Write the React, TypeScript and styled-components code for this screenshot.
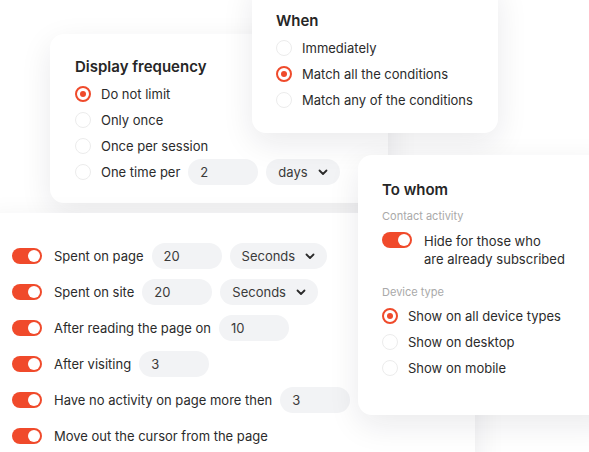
import React from 'react';
import styled, { createGlobalStyle } from 'styled-components';

const GlobalStyle = createGlobalStyle`
  html, body {
    margin: 0;
    padding: 0;
    background: #ffffff;
  }
  body {
    font-family: Inter, 'Noto Sans', sans-serif;
    color: #2b2b2b;
  }
`;

const Canvas = styled.div`
  position: relative;
  width: 589px;
  height: 452px;
  overflow: hidden;
  background: #ffffff;
`;

const Card = styled.div<{ $left: number; $top: number; $width: number; $height: number; $pt: number; $pl: number; $z: number }>`
  position: absolute;
  left: ${(p) => p.$left}px;
  top: ${(p) => p.$top}px;
  width: ${(p) => p.$width}px;
  height: ${(p) => p.$height}px;
  padding: ${(p) => p.$pt}px 0 0 ${(p) => p.$pl}px;
  box-sizing: border-box;
  background: #ffffff;
  border-radius: 14px;
  box-shadow: 0 10px 32px rgba(20, 20, 40, 0.09);
  z-index: ${(p) => p.$z};
  display: flex;
  flex-direction: column;
`;

const Title = styled.div`
  font-size: 15px;
  font-weight: 600;
  line-height: 20px;
  color: #262626;
  margin-bottom: 4px;
`;

const List = styled.div<{ $gap?: number }>`
  display: flex;
  flex-direction: column;
  gap: ${(p) => p.$gap ?? 0}px;
`;

const Row = styled.div`
  display: flex;
  align-items: center;
  height: 26px;
  font-size: 13px;
  color: #2b2b2b;
  white-space: nowrap;
`;

const Circle = styled.span<{ $on?: boolean }>`
  width: 16px;
  height: 16px;
  border-radius: 50%;
  box-sizing: border-box;
  border: ${(p) => (p.$on ? '2px solid #ef4a2b' : '1.5px solid #ececec')};
  margin-right: 10px;
  display: flex;
  align-items: center;
  justify-content: center;
  flex-shrink: 0;
  &::after {
    content: '';
    width: 6px;
    height: 6px;
    border-radius: 50%;
    background: ${(p) => (p.$on ? '#ef4a2b' : 'transparent')};
  }
`;

const Toggle = styled.span`
  position: relative;
  width: 30px;
  height: 16px;
  border-radius: 8px;
  background: #f04a2b;
  margin-right: 12px;
  flex-shrink: 0;
  &::after {
    content: '';
    position: absolute;
    right: 2px;
    top: 2px;
    width: 12px;
    height: 12px;
    border-radius: 50%;
    background: #ffffff;
  }
`;

const Field = styled.span`
  display: inline-flex;
  align-items: center;
  box-sizing: border-box;
  width: 70px;
  height: 26px;
  border-radius: 13px;
  background: #f2f3f5;
  padding-left: 12px;
  margin-left: 8px;
  font-size: 13px;
  color: #3a3a3a;
`;

const Select = styled.span`
  display: inline-flex;
  align-items: center;
  gap: 10px;
  box-sizing: border-box;
  height: 26px;
  border-radius: 13px;
  background: #f2f3f5;
  padding: 0 12px;
  margin-left: 8px;
  font-size: 13px;
  color: #3a3a3a;
`;

const Label = styled.div<{ $mt: number; $mb: number }>`
  font-size: 11px;
  line-height: 14px;
  color: #a9a9a9;
  margin-top: ${(p) => p.$mt}px;
  margin-bottom: ${(p) => p.$mb}px;
`;

const ToggleRow = styled.div`
  display: flex;
  align-items: flex-start;
  font-size: 13px;
  line-height: 18px;
  color: #2b2b2b;
`;

const Chevron = () => (
  <svg width="10" height="7" viewBox="0 0 10 7" fill="none">
    <path d="M1.5 1.5L5 5L8.5 1.5" stroke="#2b2b2b" strokeWidth="1.8" strokeLinecap="round" strokeLinejoin="round" />
  </svg>
);

const Radio = ({ on, children }: { on?: boolean; children: React.ReactNode }) => (
  <Row>
    <Circle $on={on} />
    {children}
  </Row>
);

const Switch = ({ children }: { children: React.ReactNode }) => (
  <Row>
    <Toggle />
    {children}
  </Row>
);

export default function App() {
  return (
    <>
      <GlobalStyle />
      <Canvas>
        <Card $left={50} $top={34} $width={338} $height={169} $pt={23} $pl={25} $z={1}>
          <Title>Display frequency</Title>
          <List>
            <Radio on>Do not limit</Radio>
            <Radio>Only once</Radio>
            <Radio>Once per session</Radio>
            <Radio>
              One time per
              <Field>2</Field>
              <Select>
                days
                <Chevron />
              </Select>
            </Radio>
          </List>
        </Card>

        <Card $left={252} $top={-20} $width={246} $height={153} $pt={31} $pl={24} $z={2}>
          <Title>When</Title>
          <List>
            <Radio>Immediately</Radio>
            <Radio on>Match all the conditions</Radio>
            <Radio>Match any of the conditions</Radio>
          </List>
        </Card>

        <Card $left={-20} $top={213} $width={495} $height={260} $pt={30} $pl={32} $z={1}>
          <List $gap={10}>
            <Switch>
              Spent on page
              <Field>20</Field>
              <Select>
                Seconds
                <Chevron />
              </Select>
            </Switch>
            <Switch>
              Spent on site
              <Field>20</Field>
              <Select>
                Seconds
                <Chevron />
              </Select>
            </Switch>
            <Switch>
              After reading the page on
              <Field>10</Field>
            </Switch>
            <Switch>
              After visiting
              <Field>3</Field>
            </Switch>
            <Switch>
              Have no activity on page more then
              <Field>3</Field>
            </Switch>
            <Switch>Move out the cursor from the page</Switch>
          </List>
        </Card>

        <Card $left={358} $top={155} $width={260} $height={260} $pt={25} $pl={24} $z={3}>
          <Title>To whom</Title>
          <Label $mt={5} $mb={9}>Contact activity</Label>
          <ToggleRow>
            <Toggle />
            <span>
              Hide for those who
              <br />
              are already subscribed
            </span>
          </ToggleRow>
          <Label $mt={17} $mb={4}>Device type</Label>
          <List>
            <Radio on>Show on all device types</Radio>
            <Radio>Show on desktop</Radio>
            <Radio>Show on mobile</Radio>
          </List>
        </Card>
      </Canvas>
    </>
  );
}
